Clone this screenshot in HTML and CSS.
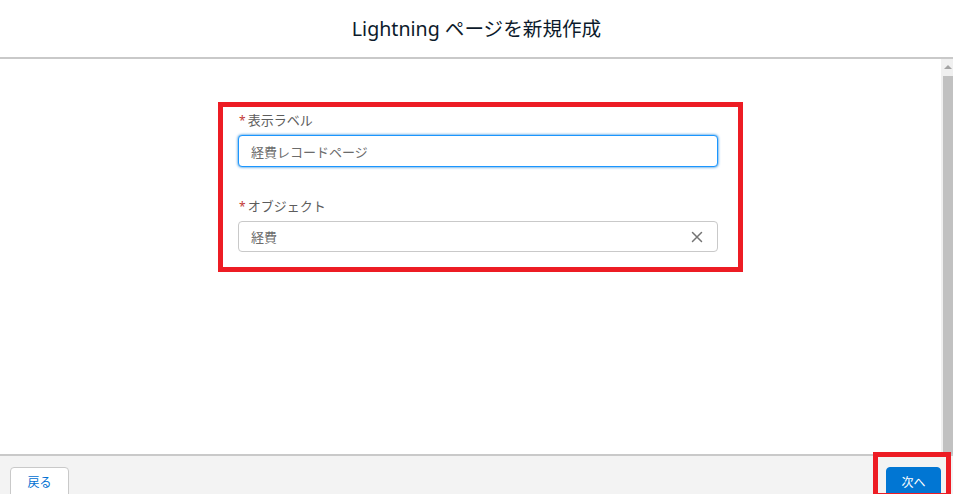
FILE: index.html
```html
<!DOCTYPE html>
<html lang="ja">
<head>
<meta charset="utf-8">
<title>Lightning ページを新規作成</title>
<link rel="stylesheet" href="styles.css">
</head>
<body>
<div class="app">
  <header class="header">
    <h1 class="title">Lightning ページを新規作成</h1>
  </header>
  <div class="body">
    <main class="content">
      <div class="highlight">
        <div class="field">
          <label class="label"><span class="req">*</span>表示ラベル</label>
          <div class="input focused">経費レコードページ</div>
        </div>
        <div class="field second">
          <label class="label"><span class="req">*</span>オブジェクト</label>
          <div class="input">
            <span>経費</span>
            <svg class="clear" width="12" height="12" viewBox="0 0 12 12" aria-hidden="true">
              <path d="M1.5 1.5 L10.5 10.5 M10.5 1.5 L1.5 10.5" stroke="#747474" stroke-width="1.5" stroke-linecap="round" fill="none"/>
            </svg>
          </div>
        </div>
      </div>
    </main>
    <div class="scrollbar">
      <div class="arrow"></div>
      <div class="thumb"></div>
    </div>
  </div>
  <footer class="footer">
    <button class="btn neutral">戻る</button>
    <button class="btn brand">次へ</button>
    <div class="mark"></div>
  </footer>
</div>
</body>
</html>
```

FILE: styles.css
```css
* { box-sizing: border-box; }
html, body { margin: 0; padding: 0; height: 100%; }
body {
  font-family: "Noto Sans", "Noto Sans CJK JP", sans-serif;
  background: #ffffff;
  color: #3e3e3c;
  overflow: hidden;
}
.app {
  display: flex;
  flex-direction: column;
  height: 494px;
  width: 953px;
}
.header {
  height: 59px;
  flex: 0 0 59px;
  border-bottom: 2px solid #c9c9c9;
  display: flex;
  align-items: center;
  justify-content: center;
  padding-bottom: 3px;
}
.title {
  margin: 0;
  font-weight: 400;
  font-size: 19.6px;
  color: #0c1a2b;
  letter-spacing: 0;
}
.body {
  flex: 0 0 395px;
  display: flex;
}
.content {
  flex: 1;
  padding-top: 43px;
  padding-left: 218px;
}
.highlight {
  width: 525px;
  height: 170px;
  border: 5px solid #ed1c24;
  padding: 4px 20px 0 15px;
}
.field.second { margin-top: 30px; }
.label {
  display: block;
  font-size: 13px;
  line-height: 18px;
  color: #5c5c5c;
  margin-bottom: 5px;
}
.req {
  color: #c23934;
  margin: 0 2px 0 1px;
  font-size: 12px;
}
.input {
  height: 32px;
  border: 1px solid #c9c9c9;
  border-radius: 4px;
  padding: 0 12px;
  display: flex;
  align-items: center;
  justify-content: space-between;
  font-size: 13px;
  color: #6b6b6b;
  background: #fff;
}
.field.second .input { height: 31px; }
.input.focused {
  border-color: #1b96ff;
  box-shadow: 0 0 3px #0176d3;
}
.clear { margin-right: 2px; }
.scrollbar {
  width: 12px;
  background: #f0f0f0;
  display: flex;
  flex-direction: column;
  align-items: flex-end;
}
.arrow {
  width: 0; height: 0;
  margin: 6px 1px 0 0;
  border-left: 4px solid transparent;
  border-right: 4px solid transparent;
  border-bottom: 4px solid #a3a3a3;
}
.thumb {
  margin-top: 7px;
  width: 10px;
  flex: 1;
  background: #c1c1c1;
}
.footer {
  position: relative;
  flex: 1;
  background: #f3f3f3;
  border-top: 2px solid #c9c9c9;
  display: flex;
  justify-content: space-between;
  align-items: flex-start;
  padding: 11px 12px 0 10px;
}
.btn {
  font-family: "Noto Sans", "Noto Sans CJK JP", sans-serif;
  height: 32px;
  border-radius: 4px;
  font-size: 12px;
  padding: 0;
  line-height: 30px;
}
.neutral {
  width: 59px;
  background: #fff;
  border: 1px solid #c9c9c9;
  color: #0070d2;
}
.brand {
  width: 55px;
  background: #0176d3;
  border: 1px solid #0176d3;
  color: #fff;
}
.mark {
  position: absolute;
  left: 873px;
  top: -4px;
  width: 78px;
  height: 46px;
  border: 5px solid #ed1c24;
}
```
